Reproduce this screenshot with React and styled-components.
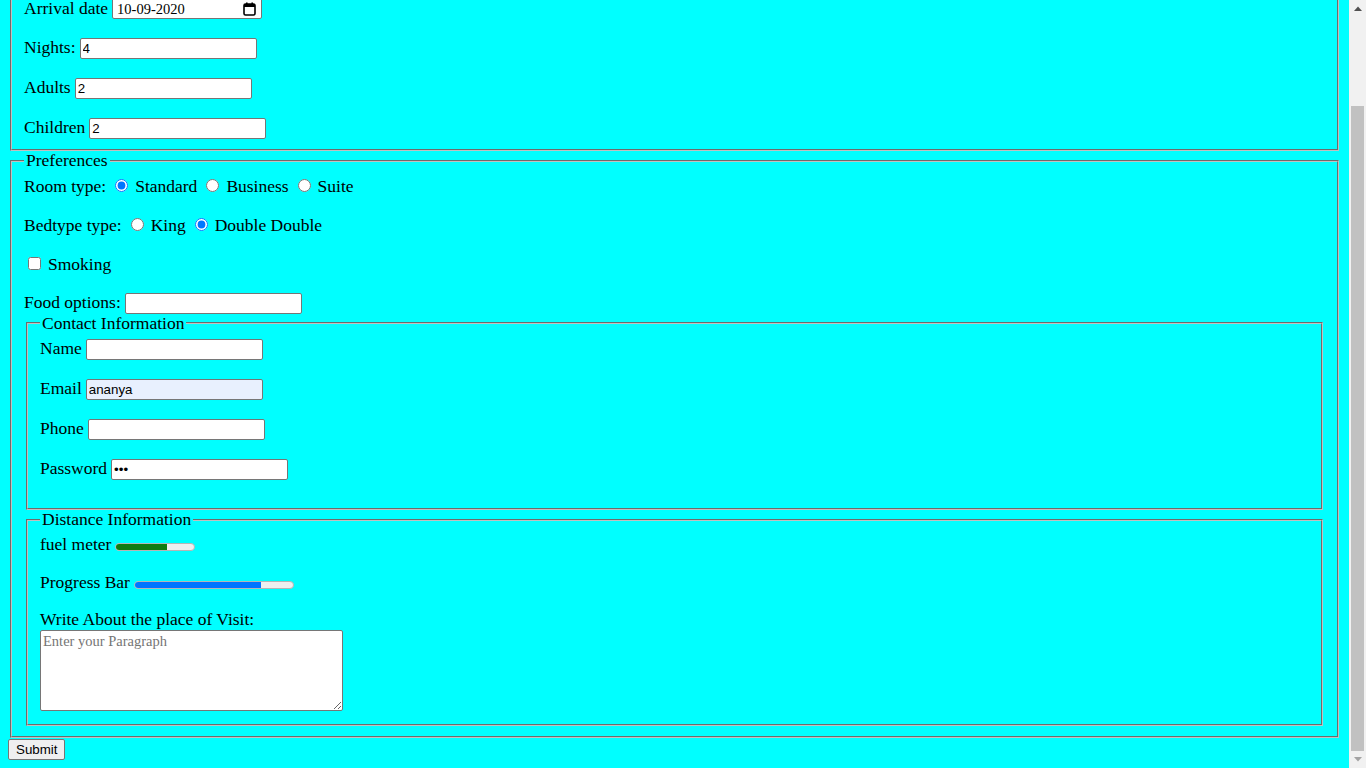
import React, { useEffect, useLayoutEffect, useState } from "react";
import styled, { createGlobalStyle } from "styled-components";

const GlobalStyle = createGlobalStyle`
  html {
    background: #00ffff;
    scrollbar-width: none;
  }
  body {
    margin: 8px 25px 8px 8px;
    background: #00ffff;
    color: #000;
    font-family: "Liberation Serif", "Times New Roman", serif;
    font-size: 17.5px;
  }
`;

const Title = styled.h1`
  margin: 21px 0;
  font-size: 32px;
  line-height: 37px;
  font-weight: bold;
`;

const Form = styled.form`
  margin: 0;
`;

const Fieldset = styled.fieldset`
  margin: 0 2px;
  padding: 6px 12px 10px;
  border: 2px groove rgb(192, 192, 192);
  min-width: min-content;
`;

const Legend = styled.legend`
  padding: 0 2px;
  font-size: 17.5px;
  line-height: 19px;
`;

const Row = styled.div`
  display: flex;
  align-items: baseline;
  gap: 4px;
  margin-bottom: ${(p) => (p.$mb ?? 19)}px;
`;

const Label = styled.label`
  line-height: 18px;
  white-space: nowrap;
`;

const BlockLabel = styled.label`
  display: block;
  line-height: 18px;
`;

const TextInput = styled.input`
  box-sizing: border-box;
  width: 177px;
  height: 21px;
  margin: 0;
  padding: 1px 2px;
  border: 1px solid #767676;
  border-radius: 2px;
  background: ${(p) => (p.$autofill ? "#e8f0fe" : "#ffffff")};
  color: #000;
  font-family: "Liberation Sans", Arial, sans-serif;
  font-size: 13.33px;
  outline: none;
`;

const Choice = styled.input`
  width: 13px;
  height: 13px;
  margin: ${(p) => (p.type === "checkbox" ? "3px 3px 0 4px" : "3px 3px 0 5px")};
  accent-color: #0075ff;
`;

const DateBox = styled.div`
  display: inline-flex;
  align-items: center;
  justify-content: space-between;
  box-sizing: border-box;
  width: 150px;
  height: 21px;
  padding: 0 5px 0 4px;
  border: 1px solid #767676;
  border-radius: 2px;
  background: #fff;
  font-size: 14.5px;
  line-height: 18px;
`;

const DateText = styled.span`
  white-space: nowrap;
`;

const CalendarIcon = styled.svg`
  display: block;
  flex: none;
`;

const BarSlot = styled.div`
  display: flex;
  padding-bottom: 1px;
`;

const Track = styled.div`
  display: flex;
  box-sizing: border-box;
  width: ${(p) => p.$w}px;
  height: 8px;
  border: 1px solid #b5b5b5;
  border-radius: 4px;
  background: #efefef;
  overflow: hidden;
`;

const Fill = styled.div`
  height: 100%;
  background: ${(p) => p.$color};
`;

const Paragraph = styled.textarea`
  display: block;
  box-sizing: border-box;
  width: 303px;
  height: 81px;
  margin: 1.5px 0 3px;
  padding: 2px;
  border: 1px solid #767676;
  border-radius: 2px;
  background: #fff;
  font-family: "Liberation Serif", "Times New Roman", serif;
  font-size: 14.5px;
  outline: none;

  &::placeholder {
    color: #757575;
  }
`;

const ButtonRow = styled.div`
  height: 22px;
`;

const SubmitButton = styled.button`
  box-sizing: border-box;
  height: 21px;
  margin: 1px 0 0;
  padding: 1px 7px;
  border: 1px solid #767676;
  border-radius: 2px;
  background: #efefef;
  color: #000;
  font-family: "Liberation Sans", Arial, sans-serif;
  font-size: 13.33px;
  line-height: 15px;
`;

/* classic browser scrollbar, drawn over the right edge of the window */
const ScrollRail = styled.div`
  position: fixed;
  top: 0;
  right: 0;
  width: 17px;
  height: 100vh;
  display: flex;
  flex-direction: column;
  background: #f1f1f1;
`;

const RailButton = styled.div`
  flex: none;
  height: 17px;
  display: flex;
  align-items: center;
  justify-content: center;
`;

const RailTrack = styled.div`
  flex: 1;
  display: flex;
  flex-direction: column;
`;

const RailThumb = styled.div`
  width: 13px;
  margin-left: 2px;
  background: #c1c1c1;
`;

function Bar({ width, value, color }) {
  return (
    <BarSlot>
      <Track $w={width} role="meter" aria-valuenow={value}>
        <Fill $color={color} style={{ width: `${value * 100}%` }} />
      </Track>
    </BarSlot>
  );
}

function Scrollbar({ top, height }) {
  return (
    <ScrollRail aria-hidden="true">
      <RailButton>
        <svg width="8" height="5" viewBox="0 0 8 5">
          <path d="M0 5 L4 0.5 L8 5 Z" fill="#505050" />
        </svg>
      </RailButton>
      <RailTrack>
        <RailThumb style={{ marginTop: top, height }} />
      </RailTrack>
      <RailButton>
        <svg width="8" height="5" viewBox="0 0 8 5">
          <path d="M0 0 L4 4.5 L8 0 Z" fill="#a3a3a3" />
        </svg>
      </RailButton>
    </ScrollRail>
  );
}

export default function App() {
  const [thumb, setThumb] = useState({ top: 90, height: 643 });

  useLayoutEffect(() => {
    const update = () => {
      const el = document.documentElement;
      window.scrollTo(0, el.scrollHeight);
      const doc = el.scrollHeight;
      const view = window.innerHeight;
      const track = view - 34;
      setThumb({
        top: (track * window.scrollY) / doc,
        height: (track * view) / doc,
      });
    };
    update();
  }, []);

  useEffect(() => {
    const t = setTimeout(
      () => window.scrollTo(0, document.documentElement.scrollHeight),
      30
    );
    return () => clearTimeout(t);
  }, []);

  return (
    <>
      <GlobalStyle />
      <Title>Hotel Reservation Form</Title>
      <Form onSubmit={(e) => e.preventDefault()}>
        <Fieldset>
          <Legend>Reservation Details</Legend>
          <Row>
            <Label>Arrival date</Label>
            <DateBox>
              <DateText>10-09-2020</DateText>
              <CalendarIcon width="13" height="14" viewBox="0 0 13 14">
                <rect x="1" y="2" width="11" height="11" rx="1.5" fill="none" stroke="#000" strokeWidth="1.6" />
                <rect x="1" y="2" width="11" height="3" fill="#000" />
                <rect x="3" y="0.5" width="1.6" height="2.5" fill="#000" />
                <rect x="8.4" y="0.5" width="1.6" height="2.5" fill="#000" />
              </CalendarIcon>
            </DateBox>
          </Row>
          <Row>
            <Label>Nights:</Label>
            <TextInput type="text" defaultValue="4" />
          </Row>
          <Row>
            <Label>Adults</Label>
            <TextInput type="text" defaultValue="2" />
          </Row>
          <Row $mb={0}>
            <Label>Children</Label>
            <TextInput type="text" defaultValue="2" />
          </Row>
        </Fieldset>

        <Fieldset>
          <Legend>Preferences</Legend>
          <Row $mb={20.2}>
            <Label>Room type:</Label>
            <Choice type="radio" name="room" defaultChecked />
            <Label>Standard</Label>
            <Choice type="radio" name="room" />
            <Label>Business</Label>
            <Choice type="radio" name="room" />
            <Label>Suite</Label>
          </Row>
          <Row $mb={19.9}>
            <Label>Bedtype type:</Label>
            <Choice type="radio" name="bed" />
            <Label>King</Label>
            <Choice type="radio" name="bed" defaultChecked />
            <Label>Double Double</Label>
          </Row>
          <Row $mb={19.5}>
            <Choice type="checkbox" />
            <Label>Smoking</Label>
          </Row>
          <Row $mb={0}>
            <Label>Food options:</Label>
            <TextInput type="text" />
          </Row>

          <Fieldset>
            <Legend>Contact Information</Legend>
            <Row>
              <Label>Name</Label>
              <TextInput type="text" />
            </Row>
            <Row>
              <Label>Email</Label>
              <TextInput type="email" defaultValue="ananya" $autofill />
            </Row>
            <Row>
              <Label>Phone</Label>
              <TextInput type="tel" />
            </Row>
            <Row $mb={18.5}>
              <Label>Password</Label>
              <TextInput type="password" defaultValue="abc" />
            </Row>
          </Fieldset>

          <Fieldset>
            <Legend>Distance Information</Legend>
            <Row $mb={20}>
              <Label>fuel meter</Label>
              <Bar width={80} value={0.65} color="#107c10" />
            </Row>
            <Row $mb={19}>
              <Label>Progress Bar</Label>
              <Bar width={160} value={0.8} color="#0075ff" />
            </Row>
            <BlockLabel>Write About the place of Visit:</BlockLabel>
            <Paragraph placeholder="Enter your Paragraph" />
          </Fieldset>
        </Fieldset>
        <ButtonRow>
          <SubmitButton type="submit">Submit</SubmitButton>
        </ButtonRow>
      </Form>
      <Scrollbar top={thumb.top} height={thumb.height} />
    </>
  );
}
